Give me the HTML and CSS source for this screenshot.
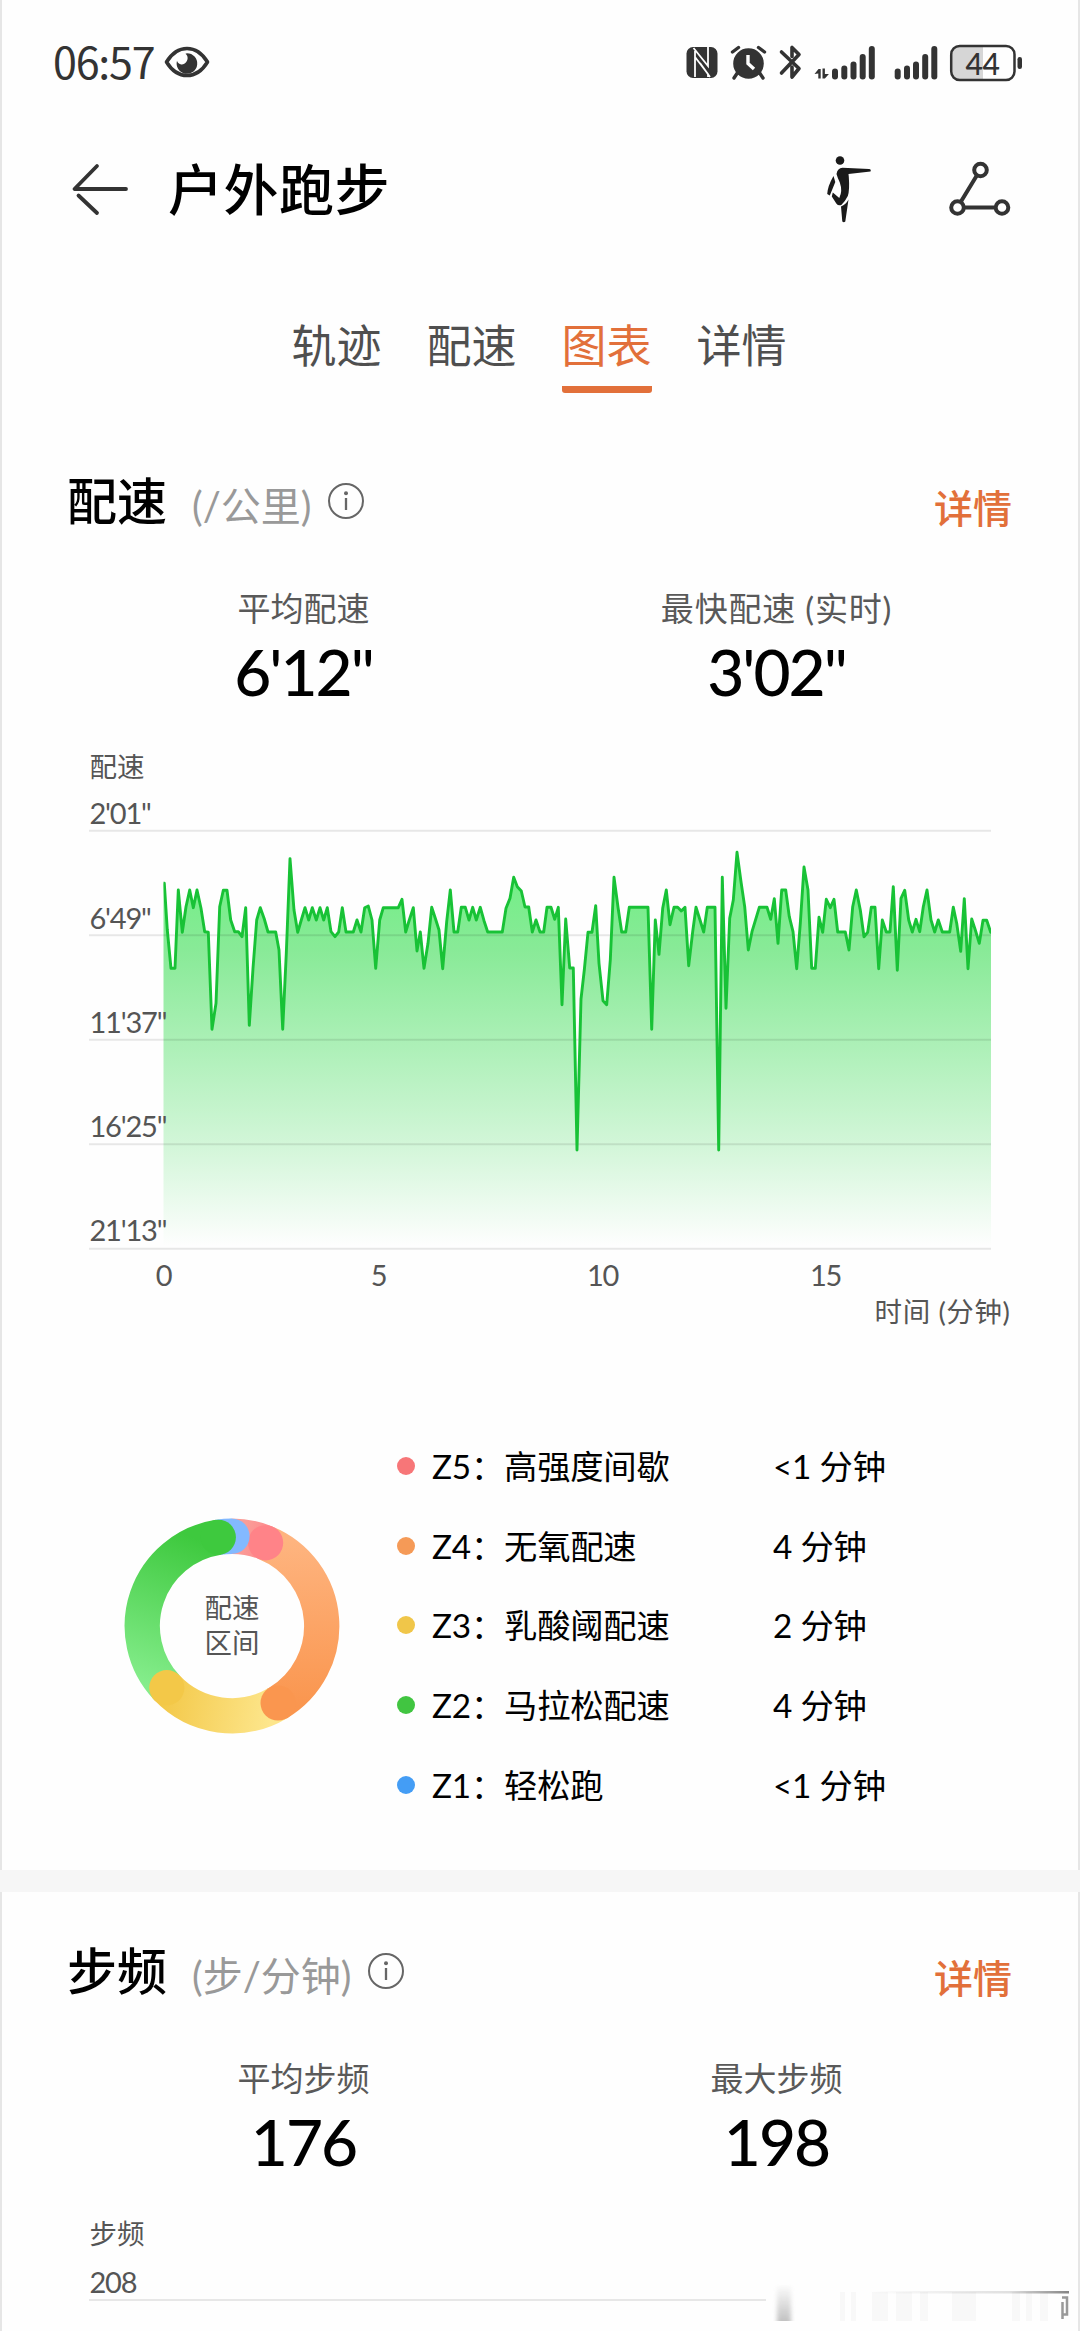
FILE: index.html
```html
<!DOCTYPE html>
<html lang="zh-CN">
<head>
<meta charset="utf-8">
<title>户外跑步</title>
<link rel="stylesheet" href="styles.css">
</head>
<body>
<div class="screen">
  <div class="status">
    <span class="clock">06:57</span>
    <svg class="eye" width="46" height="32" viewBox="0 0 46 32"><path d="M2.500 16C8 7 15 2.500 23 2.500S38 7 43.500 16C38 25 31 29.500 23 29.500S8 25 2.500 16Z" fill="none" stroke="#333" stroke-width="3.600" stroke-linejoin="round"/><path d="M23 7.200a10.300 10.300 0 1 1-10 7.600 5 5 0 0 0 8.300 2.200c3-2.700 3.200-7 .2-9.300Z" fill="#333"/></svg>
    <svg class="tray" width="344" height="42" viewBox="680 40 344 42">
      <g fill="#333">
        <rect x="686.500" y="46" width="31" height="31" rx="6.500"/>
        <path d="M695 76V50M693.500 47l14.500 18V46M708 76V73L695 56M700 62l10 14" fill="none" stroke="#fefefe" stroke-width="1.800"/>
        <circle cx="748.500" cy="62.500" r="15.300"/>
        <path d="M738 71l-4 6M759 71l4 6M732.500 51l6-4.500M764.500 51l-6-4.500" stroke="#333" stroke-width="3.400" stroke-linecap="round"/>
        <path d="M748 54v8.500l6 5.500" fill="none" stroke="#fefefe" stroke-width="3.400"/>
        <path d="M781.500 51l17.500 16.500-7 8.500V66M781.500 72l17.500-18.500-7-7v9" fill="none" stroke="#333" stroke-width="3.600" stroke-linejoin="round" stroke-linecap="round"/>
        <path d="M814.500 73l4-5h2.200v9.500h-2.400v-5ZM822.500 67.500h2.400v5.500l4 0-4 4.500h-2.400Z"/>
        <rect x="832" y="67.500" width="6" height="11" rx="3"/><rect x="841.300" y="64.500" width="6" height="14" rx="3"/><rect x="850.500" y="60.500" width="6" height="18" rx="3"/><rect x="859.700" y="53" width="6" height="25.500" rx="3"/><rect x="868.800" y="45" width="6" height="33.500" rx="3"/>
        <rect x="894.700" y="67.500" width="6" height="11" rx="3"/><rect x="904" y="64.500" width="6" height="14" rx="3"/><rect x="913" y="60.500" width="6" height="18" rx="3"/><rect x="922.200" y="53" width="6" height="25.500" rx="3"/><rect x="931.300" y="45" width="6" height="33.500" rx="3"/>
        <rect x="1017.500" y="56" width="4.500" height="12" rx="2.200"/>
      </g>
      <path d="M983 45h-23a8.500 8.500 0 0 0-8.500 8.500v17a8.500 8.500 0 0 0 8.500 8.500h23Z" fill="#d6d6d6"/>
      <rect x="951.200" y="45" width="63.300" height="34" rx="8.500" fill="none" stroke="#333" stroke-width="2.500"/>
      <text class="battery" x="982.500" y="73.500" text-anchor="middle">44</text>
    </svg>
  </div>

  <header class="topbar">
    <svg class="back" width="60" height="56" viewBox="70 161 60 56"><path d="M97 166L74.500 189H126M78.500 195.500L97 213" fill="none" stroke="#333" stroke-width="3.800" stroke-linecap="round" stroke-linejoin="round"/></svg>
    <h1>户外跑步</h1>
    <svg class="coach" width="48" height="70" viewBox="826 155 48 70"><g fill="#1a1a1a"><circle cx="840" cy="161.500" r="4.300"/><path d="M836.500 175q1-6 6-6.200L869 170q2.500.2 1.500 2.500l-22 2.500.3 3q1 13-1 19-3 6-6.500 9-3 1.200-5-1.500l-4.500-7 1-4 6.500 5.500q3.500-7 .5-15.500-2-4-3.300-8.500Z"/><path d="M833.500 177l1.800 6-5.500 13.500-2.600-1.500q.5-8 6.300-18ZM841 207.500q5-2 7.500-7l-3.200 22q-1.500 1.500-3 0Z"/></g></svg>
    <svg class="share" width="66" height="58" viewBox="947 160 66 58"><g fill="none" stroke="#333" stroke-width="4"><path d="M976.500 176L961 201.500M964 207.500h31"/><circle cx="980.500" cy="170" r="6.300"/><circle cx="957.500" cy="207.500" r="6.300"/><circle cx="1002" cy="207.500" r="6.300"/></g></svg>
  </header>

  <nav class="tabs">
    <a class="tab">轨迹</a><a class="tab">配速</a><a class="tab active">图表</a><a class="tab">详情</a>
  </nav>

  <section class="card pace">
    <div class="head">
      <h2>配速</h2><span class="unit">(/公里)</span>
      <svg class="info" width="38" height="38" viewBox="0 0 38 38"><circle cx="19" cy="19" r="17" fill="none" stroke="#666" stroke-width="2"/><circle cx="19" cy="11.300" r="2" fill="#666"/><path d="M19 16v12" stroke="#666" stroke-width="2.300"/></svg>
      <a class="more">详情</a>
    </div>
    <div class="stats">
      <div class="stat"><span class="label">平均配速</span><strong class="value">6'12"</strong></div>
      <div class="stat"><span class="label spaced">最快配速 (实时)</span><strong class="value">3'02"</strong></div>
    </div>
    <svg class="plot" width="1080" height="600" viewBox="0 740 1080 600">
      <defs>
        <linearGradient id="fill" gradientUnits="userSpaceOnUse" x1="0" y1="850" x2="0" y2="1246">
          <stop offset="0" stop-color="#6cf081"/><stop offset=".25" stop-color="#88ea97"/><stop offset=".75" stop-color="#d3f6d9"/><stop offset="1" stop-color="#fefefe"/>
        </linearGradient>
        <clipPath id="frame"><rect x="163.500" y="840" width="827.500" height="407"/></clipPath>
        <path id="series" d="M150 1260V883.300H164.300L167.300 930 171 968.300H175L178.300 890 182.300 932.300 186 906.700 189.700 890 193.300 907.700 197 890 201 908.300 204.700 931.700 208.300 932.300 212 1029.300 216 1003.300 219.700 906.700 223.300 890.300H227L230.700 920 234.700 931.700H238.300L242 936.700 245.700 907.700 249.300 1025.300 253 968.300 256.700 920 260.300 907.700 264.300 919 268 932H275.700L279 950 282.700 1029.300 286.300 953.300 290 858.700 294 910 297.700 932.300 301.300 920 305 907.700 308.700 920 312.300 907.700 316.300 920 320 907.700 323.700 920 327.300 907.700 331 931.700 335 936.700 338.700 932 342.300 907.700 346 932H353.300L357 920 361 932 364.700 907.700 368.300 906 372 920 375.700 968.300 379.700 920 383.300 907.700H398.300L402 899.300 405.700 932 409.300 920 413.300 907.700 417 951 420.300 932 424 968.300 428 943.300 431.700 907.300 435.300 918.300 439 930 442.700 968.700 446.700 921.700 450.300 890 454 932H457.700L461.300 907.300H465.300L469 920 472.700 907.300 476.300 920 480.300 907.300 484 920.700 487.700 932H502.300L506 908.300 510 898.300 513.700 877.300 517.300 886.700 521.300 891 525 907H528.700L532.300 932 536 920 540 932H543.700L547 907.300H551L554.700 919.300 558.300 907.300 562 1004.700 565.700 919 569.700 968H573.300L577 1150 581 999 584.300 970 588 932.300H592L595.700 905.700 599 963.300 603 1000.700 606.700 1004.700 610.300 960 614 877.300 618 907.300 621.700 932H625.700L629.300 907.300H648L651.700 1029.300 655.300 920 659 954.300 662.700 908.300 666.300 890 670 924.700 674 907.300H677.700L681.300 911 685 907.300 688.700 965.700 692.700 931.700 696 907.300 700 920 703.700 932 707.300 907.300H715L718.700 1150 722.300 877.300 726 1008.300 729.700 918.300 733.300 900 737 852.300 741 881.700 744.700 906.700 748.300 950 752 931.700 759.300 907.300H767L770.700 919.300 774.300 898.700 778 943.300 781.700 890H785.700L789.300 916.700 793 931.700 796.700 968.700 800.300 923.300 804 867 808 890 811.700 968.300H815.300L819 917.300 822.700 932.300 826.300 899.300 830.300 907.700 834 899.300 837.700 932H845.300L849 950 852.700 906.700 856.300 890 860.300 910 864 936.700 867.700 932.300 871.300 907.300H875L878.700 968.700 882.300 920 886.300 932H890L893.300 886.700 897.300 970.300 901 898.300 904.700 890.300 908.700 920 912.300 932 916 919.300 919.700 931.700 923.300 906.700 927 890 931 920 934.700 932 938.300 920 942.300 932H949.700L953.300 907.300 956.700 923.300 960.700 951.300 964.300 898.700 968 968.700 971.700 919 975.300 930 979.300 943.300 983 920.300H986.700L990.700 932.300H1005V1260Z"/>
      </defs>
      <g clip-path="url(#frame)"><use href="#series" fill="url(#fill)"/></g>
      <path class="rule" d="M89 830.700H991M89 935.300H991M89 1039.700H991M89 1144.300H991M89 1248.700H991"/>
      <g clip-path="url(#frame)"><use href="#series" class="trace"/></g>
      <g class="axis">
        <text x="89.500" y="776.500" class="cjk">配速</text>
        <text x="89.500" y="824">2'01"</text>
        <text x="89.500" y="928.500">6'49"</text>
        <text x="89.500" y="1032.500">11'37"</text>
        <text x="89.500" y="1137">16'25"</text>
        <text x="89.500" y="1241">21'13"</text>
        <g text-anchor="middle"><text x="163.500" y="1286">0</text><text x="378.500" y="1286">5</text><text x="602.500" y="1286">10</text><text x="825.500" y="1286">15</text></g>
        <text x="1010.500" y="1322" text-anchor="end" class="cjk spaced">时间 (分钟)</text>
      </g>
    </svg>
    <div class="zones">
      <div class="donut">
        <svg width="216" height="216" viewBox="-108 -108 216 216" fill="none" stroke-width="35.300">
          <defs>
            <linearGradient id="g2" gradientUnits="userSpaceOnUse" x1="-85" y1="60" x2="-30" y2="-85"><stop offset="0" stop-color="#85ed8c"/><stop offset="1" stop-color="#3ec93e"/></linearGradient>
            <linearGradient id="g3" gradientUnits="userSpaceOnUse" x1="40" y1="85" x2="-70" y2="65"><stop offset="0" stop-color="#fde68c"/><stop offset="1" stop-color="#f3c848"/></linearGradient>
            <linearGradient id="g4" gradientUnits="userSpaceOnUse" x1="40" y1="-85" x2="45" y2="80"><stop offset="0" stop-color="#feb47f"/><stop offset="1" stop-color="#fa964f"/></linearGradient>
            <linearGradient id="g5" gradientUnits="userSpaceOnUse" x1="10" y1="-90" x2="45" y2="-80"><stop offset="0" stop-color="#fa9d98"/><stop offset="1" stop-color="#ff8388"/></linearGradient>
          </defs>
          <path d="M-65.200 61.700A89.750 89.750 0 0 1-13.700-88.700" stroke="url(#g2)"/>
          <path d="M46.100 77A89.750 89.750 0 0 1-65.200 61.700" stroke="url(#g3)"/>
          <circle cx="-65.200" cy="61.700" r="17.600" fill="#f3c848" stroke="none"/>
          <path d="M33.600-83.200A89.750 89.750 0 0 1 46.100 77" stroke="url(#g4)"/>
          <circle cx="46.100" cy="77" r="17.600" fill="#fa964f" stroke="none"/>
          <path d="M0-89.750A89.750 89.750 0 0 1 33.600-83.200" stroke="url(#g5)"/>
          <circle cx="33.600" cy="-83.200" r="17.600" fill="#ff8388" stroke="none"/>
          <path d="M-13.700-88.700A89.750 89.750 0 0 1 0-89.750" stroke="#83b9ff"/>
          <circle cx="0" cy="-89.750" r="17.600" fill="#83b9ff" stroke="none"/>
          <circle cx="-13.700" cy="-88.700" r="17.600" fill="#3ec93e" stroke="none"/>
        </svg>
        <span class="donut-label">配速<br>区间</span>
      </div>
      <ul class="legend">
        <li class="z5"><span>Z5：高强度间歇</span><b>&lt;1 分钟</b></li>
        <li class="z4"><span>Z4：无氧配速</span><b>4 分钟</b></li>
        <li class="z3"><span>Z3：乳酸阈配速</span><b>2 分钟</b></li>
        <li class="z2"><span>Z2：马拉松配速</span><b>4 分钟</b></li>
        <li class="z1"><span>Z1：轻松跑</span><b>&lt;1 分钟</b></li>
      </ul>
    </div>
  </section>

  <section class="card cadence">
    <div class="head">
      <h2>步频</h2><span class="unit">(步/分钟)</span>
      <svg class="info" width="38" height="38" viewBox="0 0 38 38"><circle cx="19" cy="19" r="17" fill="none" stroke="#666" stroke-width="2"/><circle cx="19" cy="11.300" r="2" fill="#666"/><path d="M19 16v12" stroke="#666" stroke-width="2.300"/></svg>
      <a class="more">详情</a>
    </div>
    <div class="stats">
      <div class="stat"><span class="label">平均步频</span><strong class="value">176</strong></div>
      <div class="stat"><span class="label">最大步频</span><strong class="value">198</strong></div>
    </div>
    <svg class="plot" width="1080" height="121" viewBox="0 2210 1080 121">
      <defs>
        <linearGradient id="fade" x1="0" y1="0" x2="0" y2="1"><stop offset="0" stop-color="#888" stop-opacity="0"/><stop offset="1" stop-color="#888"/></linearGradient>
        <linearGradient id="edge" x1="0" y1="0" x2="1" y2="0"><stop offset="0" stop-color="#666" stop-opacity="0"/><stop offset=".7" stop-color="#666" stop-opacity=".2"/><stop offset="1" stop-color="#666" stop-opacity=".8"/></linearGradient>
        <filter id="soft" x="-50%" width="200%"><feGaussianBlur stdDeviation="2 0"/></filter>
      </defs>
      <g class="axis"><text x="89.500" y="2244" class="cjk">步频</text><text x="89.500" y="2293">208</text></g>
      <path class="rule" d="M89 2300H766"/>
      <rect x="777" y="2284" width="14" height="37" fill="url(#fade)" opacity=".5" filter="url(#soft)"/>
      <g fill="#888" opacity=".045"><rect x="840" y="2292" width="5" height="29"/><rect x="851" y="2292" width="5" height="29"/><rect x="872" y="2292" width="16" height="29"/><rect x="896" y="2292" width="16" height="29"/><rect x="920" y="2292" width="8" height="29"/><rect x="952" y="2292" width="24" height="29"/><rect x="1012" y="2292" width="8" height="29"/><rect x="1026" y="2292" width="6" height="29"/><rect x="1040" y="2292" width="8" height="29"/></g>
      <rect x="870" y="2291" width="199" height="2.500" fill="url(#edge)"/>
      <path d="M1062 2297.500h5v17h-4M1062.500 2302v17" fill="none" stroke="#999" stroke-width="2.500"/>
    </svg>
  </section>
</div>
</body>
</html>
```
FILE: styles.css
```css
* { box-sizing: border-box; }
body { margin: 0; background: #fefefe; font-family: Lato, "Noto Sans CJK SC", sans-serif; }
h1, h2, ul { margin: 0; padding: 0; }
svg { display: block; flex: none; }
.screen { width: 1080px; height: 2331px; overflow: hidden; background: #fefefe; box-shadow: inset 2px 0 #e6e6e6, inset -2px 0 #e6e6e6; }

.status { display: flex; align-items: center; height: 124px; padding: 0 56px 0 53px; }
.clock { width: 111px; padding-bottom: 4px; font: 400 43px/50px "Noto Sans CJK SC", sans-serif; letter-spacing: -1.200px; color: #333; }
.tray { margin-left: auto; }
.battery { font: 500 30px Lato, sans-serif; letter-spacing: -.5px; fill: #333; }

.topbar { display: flex; align-items: center; height: 130px; padding: 0 67px 0 70px; }
.topbar h1 { margin-left: 38px; font-size: 55px; font-weight: 500; line-height: 70px; letter-spacing: .5px; color: #000; }
.coach { margin-left: auto; }
.share { margin-left: 73px; }

.tabs { display: flex; justify-content: center; gap: 45px; height: 168px; padding: 60px 2px 0 0; }
.tab { width: 90px; height: 79px; font-size: 45px; line-height: 64px; color: #4f4f4f; }
.tab.active { color: #e2703a; border-bottom: 7px solid #e2703a; border-radius: 3px; }

.card { padding-top: 49px; }
.pace { height: 1448px; }
.cadence { border-top: 22px solid #f6f6f6; }
.head { display: flex; align-items: center; height: 60px; padding: 0 68px 0 67px; }
.head h2 { font-size: 50px; font-weight: 500; line-height: 60px; color: #000; }
.unit { margin-left: 25px; padding-top: 10px; font-size: 40px; line-height: 50px; color: #999; }
.info { margin-left: 16px; }
.more { margin-left: auto; padding-top: 14px; font-size: 39px; font-weight: 500; line-height: 45px; color: #e2703a; }

.stats { display: flex; height: 209px; padding: 57px 67px 0; }
.stat { flex: 1; display: flex; flex-direction: column; align-items: center; }
.label { font-size: 33px; line-height: 40px; color: #595959; }
.label.spaced { letter-spacing: .8px; }
.value { margin-top: 9px; font-size: 64px; font-weight: 500; line-height: 70px; letter-spacing: -2px; color: #000; }

.axis { font-size: 29px; fill: #555; letter-spacing: -1.200px; }
.cjk { font-size: 27.500px; letter-spacing: 0; }
.cjk.spaced { letter-spacing: .6px; }
.rule { fill: none; stroke: #000; stroke-opacity: .09; stroke-width: 2; }
.trace { fill: none; stroke: #18c236; stroke-width: 2.900; stroke-linejoin: round; stroke-linecap: round; }

.zones { display: flex; align-items: center; height: 399px; margin-top: 86px; padding-left: 124px; }
.donut { display: grid; place-items: center; width: 216px; height: 216px; }
.donut > * { grid-area: 1 / 1; }
.donut-label { font-size: 27.500px; line-height: 34.400px; color: #555; }
.legend { width: 600px; margin-left: 57px; list-style: none; }
.legend li { display: flex; align-items: center; height: 79.800px; font-size: 33.300px; line-height: 44px; color: #000; }
.legend li::before { content: ""; width: 18px; height: 18px; border-radius: 50%; background: var(--dot); }
.legend span { width: 341px; margin-left: 17px; letter-spacing: -.2px; }
.legend b { font-weight: 400; letter-spacing: -.2px; }
.z5 { --dot: #f77678; }
.z4 { --dot: #f59a57; }
.z3 { --dot: #f0c649; }
.z2 { --dot: #41c541; }
.z1 { --dot: #449df5; }
```
